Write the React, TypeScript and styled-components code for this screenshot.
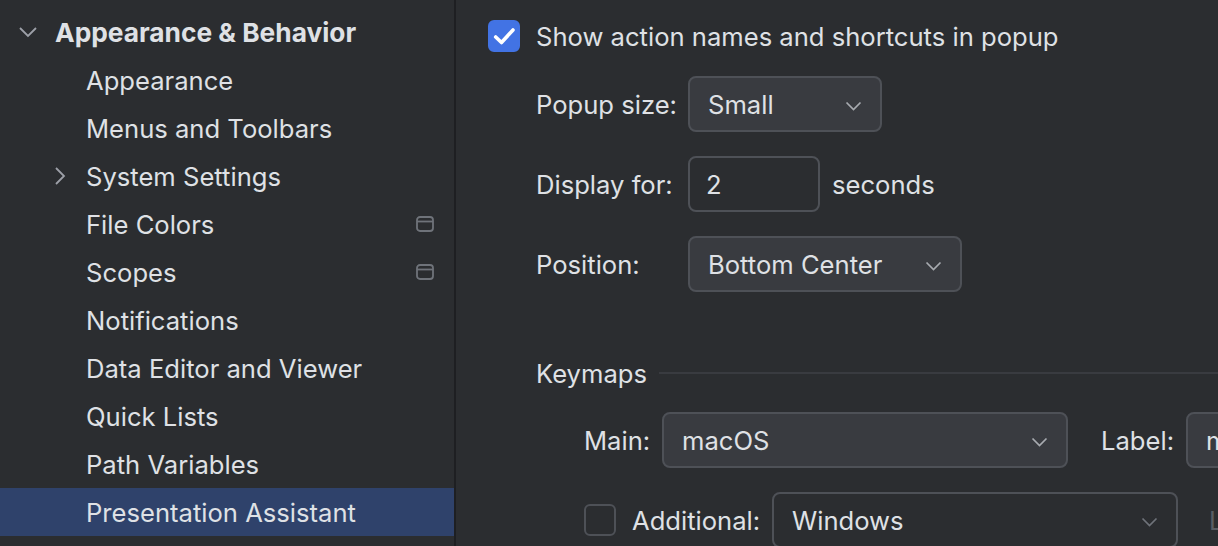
import * as React from 'react';
import styled, { createGlobalStyle } from 'styled-components';

const GlobalStyle = createGlobalStyle`
  html, body {
    margin: 0;
    padding: 0;
    background: #2b2d30;
  }
  body {
    font-family: Inter, "Noto Sans", sans-serif;
    font-size: 25.6px;
    color: #dfe1e5;
    -webkit-font-smoothing: antialiased;
  }
`;

const Window = styled.div`
  display: flex;
  width: 1218px;
  height: 546px;
  overflow: hidden;
  background: #2b2d30;
`;

const Sidebar = styled.div`
  flex: 0 0 454px;
  padding-top: 8px;
  border-right: 2px solid #1e1f22;
`;

const TreeRow = styled.div<{ $selected?: boolean; $indent: number }>`
  display: flex;
  align-items: center;
  height: 48px;
  padding-left: ${p => p.$indent}px;
  padding-right: 20px;
  background: ${p => (p.$selected ? '#2f426b' : 'transparent')};
  position: relative;
`;

const TreeLabel = styled.span<{ $bold?: boolean }>`
  flex: 1;
  padding-top: ${p => (p.$bold ? '1px' : '0')};
  font-size: ${p => (p.$bold ? '26.3px' : 'inherit')};
  font-weight: ${p => (p.$bold ? 700 : 400)};
  white-space: nowrap;
`;

const Arrow = styled.svg`
  position: absolute;
  width: 20px;
  height: 20px;
  fill: none;
  stroke: #9da0a8;
  stroke-width: 1.8;
`;

const Main = styled.div`
  flex: 1;
  min-width: 0;
  padding: 20px 0 0 32px;
`;

const CheckRow = styled.label`
  display: flex;
  align-items: center;
  gap: 16px;
  height: 32px;
  white-space: nowrap;
`;

const CheckBox = styled.span<{ $checked?: boolean }>`
  display: flex;
  align-items: center;
  justify-content: center;
  flex: none;
  box-sizing: border-box;
  width: 32px;
  height: 32px;
  border-radius: 6px;
  background: ${p => (p.$checked ? '#4273e4' : 'transparent')};
  border: 2px solid ${p => (p.$checked ? '#4273e4' : '#4e5157')};
`;

const ShiftedText = styled.span`
  padding-top: 1px;
  white-space: nowrap;
`;

const Form = styled.div`
  display: grid;
  grid-template-columns: 152px max-content;
  row-gap: 24px;
  align-items: center;
  margin: 24px 0 0 48px;
`;

const Combo = styled.div<{ $width: number }>`
  display: flex;
  align-items: center;
  justify-content: space-between;
  flex: none;
  box-sizing: border-box;
  width: ${p => p.$width}px;
  height: 56px;
  padding: 0 17px 0 18px;
  background: #393b40;
  border: 2px solid #4e5157;
  border-radius: 8px;
  white-space: nowrap;
`;

const OutlineCombo = styled(Combo)`
  background: transparent;
`;

const ComboArrow = styled.svg<{ $dim?: boolean }>`
  flex: none;
  width: 18px;
  height: 18px;
  fill: none;
  stroke: ${p => (p.$dim ? '#6f737a' : '#a8abb0')};
  stroke-width: 1.7;
`;

const NumberRow = styled.div`
  display: flex;
  align-items: center;
  gap: 12px;
`;

const NumberInput = styled.div`
  box-sizing: border-box;
  width: 132px;
  height: 56px;
  padding-left: 16px;
  line-height: 53px;
  border: 2px solid #4e5157;
  border-radius: 8px;
`;

const Section = styled.div`
  margin: 65px 0 0 48px;
`;

const SectionTitle = styled.div`
  display: flex;
  align-items: center;
  gap: 12px;
  height: 32px;
  white-space: nowrap;
`;

const SectionLine = styled.div`
  flex: 1;
  height: 2px;
  background: #393b40;
`;

const KeymapRow = styled.div<{ $top: number }>`
  display: flex;
  align-items: center;
  width: 800px;
  margin: ${p => p.$top}px 0 0 96px;
`;

const RowLabel = styled(ShiftedText)<{ $width: number; $before?: number }>`
  flex: none;
  width: ${p => p.$width}px;
  margin-left: ${p => p.$before ?? 0}px;
`;

const DimLabel = styled(ShiftedText)`
  margin-left: 31px;
  color: #5a5d63;
`;

const ChevronDown = ({ dim }: { dim?: boolean }) => (
  <ComboArrow $dim={dim} viewBox="0 0 18 18">
    <path d="M1.5 7.5 L8.5 14.5 L15.5 7.5" />
  </ComboArrow>
);

const TabIcon = () => (
  <svg width="18" height="16" viewBox="0 0 18 16" fill="none" stroke="#6f737a" strokeWidth="1.8">
    <rect x="1" y="1" width="16" height="14" rx="3" />
    <path d="M1 5.5 H17" />
  </svg>
);

type TreeItem = {
  label: string;
  hasArrow?: boolean;
  tab?: boolean;
  selected?: boolean;
};

const items: Array<TreeItem> = [
  { label: 'Appearance' },
  { label: 'Menus and Toolbars' },
  { label: 'System Settings', hasArrow: true },
  { label: 'File Colors', tab: true },
  { label: 'Scopes', tab: true },
  { label: 'Notifications' },
  { label: 'Data Editor and Viewer' },
  { label: 'Quick Lists' },
  { label: 'Path Variables' },
  { label: 'Presentation Assistant', selected: true },
];

export default function App(): React.ReactElement {
  return (
    <Window>
      <GlobalStyle />
      <Sidebar>
        <TreeRow $indent={55}>
          <Arrow viewBox="0 0 20 20" style={{ left: 18 }}>
            <path d="M2 6 L10 14 L18 6" />
          </Arrow>
          <TreeLabel $bold>Appearance &amp; Behavior</TreeLabel>
        </TreeRow>
        {items.map(item => (
          <TreeRow key={item.label} $indent={86} $selected={item.selected}>
            {item.hasArrow && (
              <Arrow viewBox="0 0 20 20" style={{ left: 50 }}>
                <path d="M6 2 L14 10 L6 18" />
              </Arrow>
            )}
            <TreeLabel>{item.label}</TreeLabel>
            {item.tab && <TabIcon />}
          </TreeRow>
        ))}
      </Sidebar>

      <Main>
        <CheckRow>
          <CheckBox $checked>
            <svg width="24" height="24" viewBox="0 0 24 24" fill="none" stroke="#fff" strokeWidth="3.6" strokeLinecap="round" strokeLinejoin="round">
              <path d="M3.7 13 L9.5 18.5 L21 6" />
            </svg>
          </CheckBox>
          <ShiftedText>Show action names and shortcuts in popup</ShiftedText>
        </CheckRow>

        <Form>
          <ShiftedText>Popup size:</ShiftedText>
          <Combo $width={194}>
            <ShiftedText>Small</ShiftedText>
            <ChevronDown />
          </Combo>
          <ShiftedText>Display for:</ShiftedText>
          <NumberRow>
            <NumberInput>2</NumberInput>
            <ShiftedText>seconds</ShiftedText>
          </NumberRow>
          <ShiftedText>Position:</ShiftedText>
          <Combo $width={274}>
            <ShiftedText>Bottom Center</ShiftedText>
            <ChevronDown />
          </Combo>
        </Form>

        <Section>
          <SectionTitle>
            <ShiftedText>Keymaps</ShiftedText>
            <SectionLine />
          </SectionTitle>
        </Section>

        <KeymapRow $top={23}>
          <RowLabel $width={78}>Main:</RowLabel>
          <Combo $width={406}>
            <ShiftedText>macOS</ShiftedText>
            <ChevronDown />
          </Combo>
          <RowLabel $before={33} $width={85}>Label:</RowLabel>
          <Combo $width={300}>
            <ShiftedText>macOS</ShiftedText>
          </Combo>
        </KeymapRow>

        <KeymapRow $top={24}>
          <CheckBox />
          <RowLabel $before={16} $width={140}>Additional:</RowLabel>
          <OutlineCombo $width={406}>
            <ShiftedText>Windows</ShiftedText>
            <ChevronDown dim />
          </OutlineCombo>
          <DimLabel>Label:</DimLabel>
        </KeymapRow>
      </Main>
    </Window>
  );
}
